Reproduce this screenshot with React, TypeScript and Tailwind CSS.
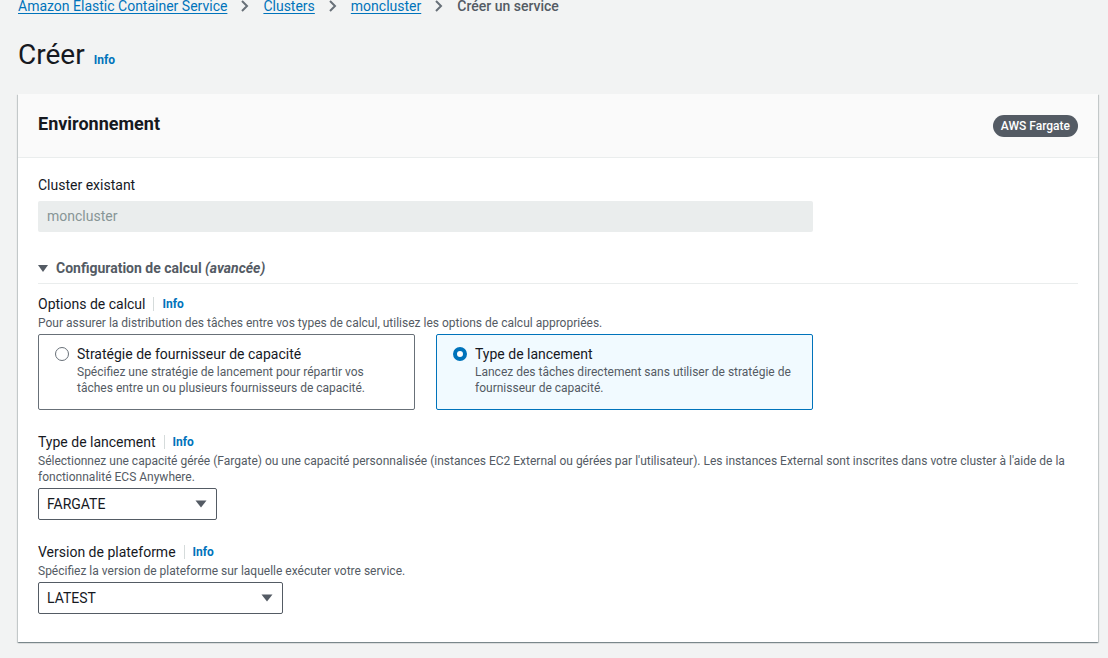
import React from "react";

const Info = ({ cls = "" }: { cls?: string }) => (
  <span className={`text-[12px] font-bold text-[#0073bb] ${cls}`}>Info</span>
);

const Caret = () => (
  <svg width="12" height="8" viewBox="0 0 12 8" className="shrink-0">
    <path d="M0.5 0.5 H11.5 L6 7.5 Z" fill="#545b64" />
  </svg>
);

const Chevron = () => (
  <svg width="10" height="12" viewBox="0 0 10 12" className="mx-[13px]">
    <path d="M2 1 L7 6 L2 11" stroke="#687078" strokeWidth="2" fill="none" />
  </svg>
);

export default function App() {
  return (
    <div
      className="min-h-[658px] bg-[#f2f3f3] text-[#16191f] overflow-hidden"
      style={{ fontFamily: 'Roboto, "Noto Sans", Arial, sans-serif' }}
    >
      <div className="pl-[18px] pr-[10px]">
        <div className="-mt-[4px] flex items-center h-[20px] text-[14px] leading-[20px]">
          <a className="text-[#0073bb] underline underline-offset-2">Amazon Elastic Container Service</a>
          <Chevron />
          <a className="text-[#0073bb] underline underline-offset-2">Clusters</a>
          <Chevron />
          <a className="text-[#0073bb] underline underline-offset-2">moncluster</a>
          <Chevron />
          <span className="text-[#545b64] font-medium">Créer un service</span>
        </div>

        <div className="mt-[21px] flex items-baseline gap-[9px]">
          <h1 className="text-[28px] leading-[36px] font-normal">Créer</h1>
          <Info cls="text-[12px]" />
        </div>

        <div className="mt-[21px] bg-white shadow-[0_1px_1px_0_rgba(0,28,36,0.3),1px_1px_1px_0_rgba(0,28,36,0.15),-1px_1px_1px_0_rgba(0,28,36,0.15)]">
          <div className="h-[64px] bg-[#fafafa] border-b border-[#eaeded] flex items-center justify-between px-[20px]">
            <h2 className="text-[18px] font-bold mb-[4px]">Environnement</h2>
            <span className="bg-[#545b64] text-white text-[12px] font-medium rounded-full px-[8px] h-[22px] leading-[22px]">AWS Fargate</span>
          </div>

          <div className="px-[20px] pt-[17px] pb-[28px]">
            <div className="text-[14px] leading-[20px]">Cluster existant</div>
            <div className="mt-[6px] w-[775px] h-[31px] bg-[#eaeded] rounded-[2px] px-[9px] flex items-center text-[14px] text-[#879596]">
              moncluster
            </div>

            <div className="mt-[26px] flex items-center gap-[8px] text-[14px] font-bold pb-[4px] border-b border-[#eaeded]">
              <svg width="10" height="8" viewBox="0 0 10 8"><path d="M0 0 H10 L5 7 Z" fill="#545b64" /></svg>
              <span className="text-[#545b64]">
                Configuration de calcul <i className="font-bold italic">(avancée)</i>
              </span>
            </div>

            <div className="mt-[10px] flex items-center text-[14px] leading-[20px]">
              <span>Options de calcul</span>
              <span className="mx-[8px] h-[14px] w-px bg-[#d5dbdb]" />
              <Info />
            </div>
            <div className="mt-[1px] text-[12px] leading-[16px] text-[#545b64]">
              Pour assurer la distribution des tâches entre vos types de calcul, utilisez les options de calcul appropriées.
            </div>

            <div className="mt-[3px] flex gap-[21px]">
              <div className="w-[377px] h-[76px] border border-[#687078] rounded-[2px] pl-[16px] pr-[12px] pt-[9px]">
                <div className="flex items-start gap-[8px]">
                  <span className="mt-[3px] w-[14px] h-[14px] rounded-full border-[1.5px] border-[#687078] shrink-0" />
                  <div>
                    <div className="text-[14px] leading-[20px]">Stratégie de fournisseur de capacité</div>
                    <div className="text-[12px] leading-[16px] text-[#545b64] pr-[10px]">
                      Spécifiez une stratégie de lancement pour répartir vos tâches entre un ou plusieurs fournisseurs de capacité.
                    </div>
                  </div>
                </div>
              </div>
              <div className="w-[377px] h-[76px] border border-[#0073bb] bg-[#f1faff] rounded-[2px] pl-[16px] pr-[12px] pt-[9px]">
                <div className="flex items-start gap-[8px]">
                  <span className="mt-[3px] w-[14px] h-[14px] rounded-full border-[4px] border-[#0073bb] bg-white shrink-0" />
                  <div>
                    <div className="text-[14px] leading-[20px]">Type de lancement</div>
                    <div className="text-[12px] leading-[16px] text-[#545b64] pr-[6px]">
                      Lancez des tâches directement sans utiliser de stratégie de fournisseur de capacité.
                    </div>
                  </div>
                </div>
              </div>
            </div>

            <div className="mt-[22px] flex items-center text-[14px] leading-[20px]">
              <span>Type de lancement</span>
              <span className="mx-[8px] h-[14px] w-px bg-[#d5dbdb]" />
              <Info />
            </div>
            <div className="mt-[1px] text-[12px] leading-[16px] text-[#545b64]">
              Sélectionnez une capacité gérée (Fargate) ou une capacité personnalisée (instances EC2 External ou gérées par l'utilisateur). Les instances External sont inscrites dans votre cluster à l'aide de la fonctionnalité ECS Anywhere.
            </div>
            <div className="mt-[3px] w-[179px] h-[32px] border border-[#545b64] rounded-[2px] flex items-center justify-between pl-[8px] pr-[9px] text-[14px]">
              <span>FARGATE</span>
              <Caret />
            </div>

            <div className="mt-[22px] flex items-center text-[14px] leading-[20px]">
              <span>Version de plateforme</span>
              <span className="mx-[8px] h-[14px] w-px bg-[#d5dbdb]" />
              <Info />
            </div>
            <div className="mt-[1px] text-[12px] leading-[16px] text-[#545b64]">
              Spécifiez la version de plateforme sur laquelle exécuter votre service.
            </div>
            <div className="mt-[3px] w-[245px] h-[32px] border border-[#545b64] rounded-[2px] flex items-center justify-between pl-[8px] pr-[9px] text-[14px]">
              <span>LATEST</span>
              <Caret />
            </div>
          </div>
        </div>
      </div>
    </div>
  );
}
